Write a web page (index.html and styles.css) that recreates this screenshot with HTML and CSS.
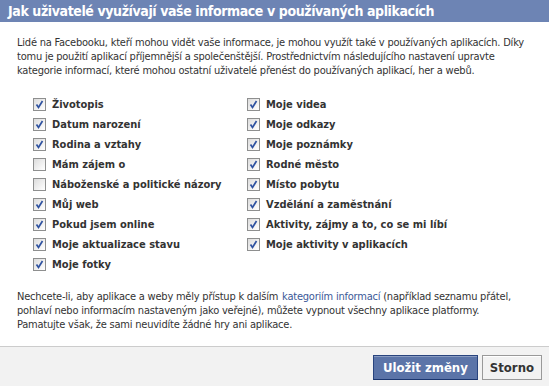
FILE: index.html
```html
<!DOCTYPE html>
<html lang="cs">
<head>
<meta charset="utf-8">
<title>Aplikace</title>
<link rel="stylesheet" href="styles.css">
</head>
<body>
<div class="dialog">
  <div class="header">Jak uživatelé využívají vaše informace v používaných aplikacích</div>
  <div class="content">
    <p class="intro">Lidé na Facebooku, kteří mohou vidět vaše informace, je mohou využít také v používaných aplikacích. Díky tomu je použití aplikací příjemnější a společenštější. Prostřednictvím následujícího nastavení upravte kategorie informací, které mohou ostatní uživatelé přenést do používaných aplikací, her a webů.</p>
    <div class="options">
      <div class="col">
        <label class="opt"><span class="cb on"><svg viewBox="0 0 11 11"><path d="M2.5 5.5 L4.5 8.5 L8.5 2" /></svg></span>Životopis</label>
        <label class="opt"><span class="cb on"><svg viewBox="0 0 11 11"><path d="M2.5 5.5 L4.5 8.5 L8.5 2" /></svg></span>Datum narození</label>
        <label class="opt"><span class="cb on"><svg viewBox="0 0 11 11"><path d="M2.5 5.5 L4.5 8.5 L8.5 2" /></svg></span>Rodina a vztahy</label>
        <label class="opt"><span class="cb"></span>Mám zájem o</label>
        <label class="opt"><span class="cb"></span>Náboženské a politické názory</label>
        <label class="opt"><span class="cb on"><svg viewBox="0 0 11 11"><path d="M2.5 5.5 L4.5 8.5 L8.5 2" /></svg></span>Můj web</label>
        <label class="opt"><span class="cb on"><svg viewBox="0 0 11 11"><path d="M2.5 5.5 L4.5 8.5 L8.5 2" /></svg></span>Pokud jsem online</label>
        <label class="opt"><span class="cb on"><svg viewBox="0 0 11 11"><path d="M2.5 5.5 L4.5 8.5 L8.5 2" /></svg></span>Moje aktualizace stavu</label>
        <label class="opt"><span class="cb on"><svg viewBox="0 0 11 11"><path d="M2.5 5.5 L4.5 8.5 L8.5 2" /></svg></span>Moje fotky</label>
      </div>
      <div class="col">
        <label class="opt"><span class="cb on"><svg viewBox="0 0 11 11"><path d="M2.5 5.5 L4.5 8.5 L8.5 2" /></svg></span>Moje videa</label>
        <label class="opt"><span class="cb on"><svg viewBox="0 0 11 11"><path d="M2.5 5.5 L4.5 8.5 L8.5 2" /></svg></span>Moje odkazy</label>
        <label class="opt"><span class="cb on"><svg viewBox="0 0 11 11"><path d="M2.5 5.5 L4.5 8.5 L8.5 2" /></svg></span>Moje poznámky</label>
        <label class="opt"><span class="cb on"><svg viewBox="0 0 11 11"><path d="M2.5 5.5 L4.5 8.5 L8.5 2" /></svg></span>Rodné město</label>
        <label class="opt"><span class="cb on"><svg viewBox="0 0 11 11"><path d="M2.5 5.5 L4.5 8.5 L8.5 2" /></svg></span>Místo pobytu</label>
        <label class="opt"><span class="cb on"><svg viewBox="0 0 11 11"><path d="M2.5 5.5 L4.5 8.5 L8.5 2" /></svg></span>Vzdělání a zaměstnání</label>
        <label class="opt"><span class="cb on"><svg viewBox="0 0 11 11"><path d="M2.5 5.5 L4.5 8.5 L8.5 2" /></svg></span>Aktivity, zájmy a to, co se mi líbí</label>
        <label class="opt"><span class="cb on"><svg viewBox="0 0 11 11"><path d="M2.5 5.5 L4.5 8.5 L8.5 2" /></svg></span>Moje aktivity v aplikacích</label>
      </div>
    </div>
    <p class="outro">Nechcete-li, aby aplikace a weby měly přístup k dalším <a href="#" class="link">kategoriím informací</a> (například seznamu přátel, pohlaví nebo informacím nastaveným jako veřejné), můžete vypnout všechny aplikace platformy. Pamatujte však, že sami neuvidíte žádné hry ani aplikace.</p>
  </div>
  <div class="footer">
    <button class="btn primary">Uložit změny</button>
    <button class="btn">Storno</button>
  </div>
</div>
</body>
</html>
```

FILE: styles.css
```css
html, body {
  margin: 0;
  padding: 0;
  background: #fff;
}
body {
  font-family: "DejaVu Sans Condensed", "Liberation Sans", sans-serif;
  font-size: 11px;
  color: #333;
}
.dialog {
  width: 549px;
  height: 386px;
  display: flex;
  flex-direction: column;
}
.header {
  height: 22px;
  line-height: 22px;
  background: #6d84b4;
  color: #fff;
  font-weight: bold;
  font-size: 14px;
  letter-spacing: -0.4px;
  padding-left: 8px;
  white-space: nowrap;
}
.content {
  flex: 1;
  padding: 14px 22px 0 17px;
}
.intro, .outro {
  margin: 0;
  line-height: 14px;
  letter-spacing: -0.22px;
}
.options {
  display: grid;
  grid-template-columns: 214px 1fr;
  padding: 16px 0 0 16px;
}
.col {
  display: flex;
  flex-direction: column;
}
.opt {
  display: flex;
  align-items: center;
  height: 20px;
  font-weight: bold;
  color: #333;
  white-space: nowrap;
}
.cb {
  box-sizing: border-box;
  width: 13px;
  height: 13px;
  border: 1px solid #8e8f8f;
  background: linear-gradient(135deg, #dcdcdc 0%, #f5f5f5 70%, #ffffff 100%);
  margin-right: 6px;
  display: flex;
  align-items: center;
  justify-content: center;
  flex: none;
}
.cb svg {
  width: 11px;
  height: 11px;
}
.cb svg path {
  fill: none;
  stroke: #2f52a0;
  stroke-width: 1.7;
}
.outro {
  margin-top: 16px;
}
.link {
  color: #3b5998;
  text-decoration: none;
  padding-left: 1px;
}
.footer {
  border-top: 1px solid #cccccc;
  background: #f2f2f2;
  display: flex;
  justify-content: flex-end;
  align-items: flex-start;
  gap: 4px;
  padding: 8px 7px 0 0;
  box-sizing: border-box;
  height: 40px;
}
.btn {
  font-family: inherit;
  font-size: 13px;
  font-weight: bold;
  height: 25px;
  padding: 0 7px;
  border: 1px solid #999;
  background: #f2f2f2;
  color: #333;
  box-shadow: inset 0 1px 0 #fff;
  cursor: pointer;
}
.btn.primary {
  background: #5b74a8;
  border-color: #29447e #29447e #1a356e;
  color: #fff;
  box-shadow: inset 0 1px 0 #8a9cc2;
  padding: 0 9px;
}
```
